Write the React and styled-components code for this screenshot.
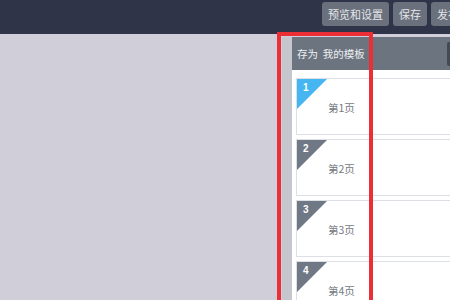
import React from 'react';
import styled, { createGlobalStyle } from 'styled-components';

const GlobalStyle = createGlobalStyle`
  html, body {
    margin: 0;
    padding: 0;
    width: 450px;
    height: 300px;
    overflow: hidden;
    font-family: "Noto Sans CJK SC", "Noto Sans", sans-serif;
  }
`;

const pages = [1, 2, 3, 4];

export default function App() {
  return (
    <>
      <GlobalStyle />
      <Page>
        <TopBar>
          <TopButton>预览和设置</TopButton>
          <TopButton>保存</TopButton>
          <TopButton>发布</TopButton>
        </TopBar>
        <Main>
          <Canvas />
          <Panel>
            <Strip />
            <PanelBody>
              <PanelHeader>
                <HeaderTitle>{'存为  我的模板'}</HeaderTitle>
                <HeaderAction />
              </PanelHeader>
              <PageList>
                {pages.map((n) => (
                  <PageCard key={n}>
                    <Corner active={n === 1}>
                      <CornerNum>{n}</CornerNum>
                    </Corner>
                    <PageLabel>第{n}页</PageLabel>
                  </PageCard>
                ))}
              </PageList>
            </PanelBody>
          </Panel>
          <Highlight />
        </Main>
      </Page>
    </>
  );
}

const Page = styled.div`
  width: 450px;
  height: 300px;
  display: flex;
  flex-direction: column;
  background: #d0cfd9;
  overflow: hidden;
`;

const TopBar = styled.div`
  height: 34px;
  flex-shrink: 0;
  background: #2f3448;
  display: flex;
  align-items: flex-start;
  gap: 4px;
  padding: 2px 0 0 322px;
  box-sizing: border-box;
  white-space: nowrap;
  overflow: hidden;
`;

const TopButton = styled.button`
  flex-shrink: 0;
  height: 24px;
  padding: 0 6px;
  border: none;
  border-radius: 3px;
  background: #6a717d;
  color: #e4e6ea;
  font-family: inherit;
  font-size: 11px;
  line-height: 24px;
`;

const Main = styled.div`
  position: relative;
  flex: 1;
  display: flex;
  min-height: 0;
`;

const Canvas = styled.div`
  width: 282px;
  flex-shrink: 0;
  background: #d0cfd9;
`;

const Panel = styled.div`
  flex: 1;
  display: flex;
  min-width: 0;
  padding-top: 3px;
  background: #d0cfd9;
`;

const Strip = styled.div`
  width: 10px;
  flex-shrink: 0;
  background: #c6c6cf;
`;

const PanelBody = styled.div`
  flex: 1;
  display: flex;
  flex-direction: column;
  background: #ffffff;
  min-width: 0;
`;

const PanelHeader = styled.div`
  height: 33px;
  flex-shrink: 0;
  display: flex;
  align-items: center;
  justify-content: space-between;
  padding-left: 5px;
  background: #6c7480;
  color: #eef0f2;
  font-size: 10.5px;
`;

const HeaderTitle = styled.span`
  white-space: pre;
`;

const HeaderAction = styled.div`
  width: 3px;
  height: 24px;
  background: #444955;
  border-radius: 2px 0 0 2px;
`;

const PageList = styled.div`
  display: flex;
  flex-direction: column;
  gap: 4px;
  padding: 8px 0 0 4px;
`;

const PageCard = styled.div`
  position: relative;
  height: 57px;
  border: 1px solid #dcdfe4;
  border-right: none;
  background: #ffffff;
  box-sizing: border-box;
`;

const Corner = styled.div`
  position: absolute;
  left: 0;
  top: 0;
  width: 30px;
  height: 30px;
  background: ${(p) => (p.active ? '#45b6f2' : '#6f7884')};
  clip-path: polygon(0 0, 100% 0, 0 100%);
`;

const CornerNum = styled.span`
  position: absolute;
  left: 6px;
  top: 3px;
  color: #ffffff;
  font-size: 10px;
  font-weight: bold;
  font-family: "Liberation Sans", sans-serif;
`;

const PageLabel = styled.div`
  padding: 21px 0 0 31px;
  color: #75797f;
  font-size: 10.5px;
`;

const Highlight = styled.div`
  position: absolute;
  left: 277px;
  top: -2px;
  width: 96px;
  height: 320px;
  border: 4px solid #ec2f36;
  box-sizing: border-box;
  pointer-events: none;
`;
